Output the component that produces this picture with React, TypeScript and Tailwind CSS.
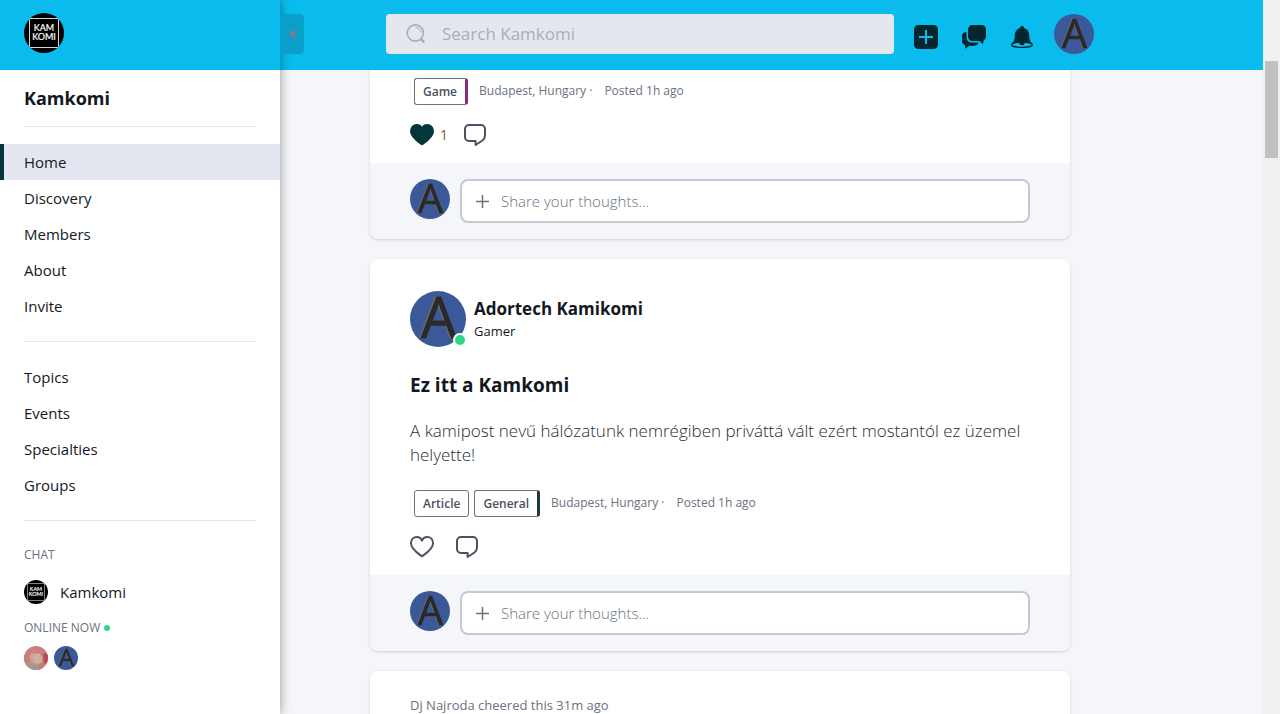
import { useState } from 'react';
import { clsx } from 'clsx';

const mainLinks = ['Home', 'Discovery', 'Members', 'About', 'Invite'];
const groupLinks = ['Topics', 'Events', 'Specialties', 'Groups'];

type Tag = { label: string; accent?: string };

const Avatar = ({ className }: { className: string }) => (
  <svg viewBox="0 0 40 40" className={clsx('shrink-0 rounded-full bg-[#3b5998]', className)} role="img" aria-label="Adortech Kamikomi">
    <text
      x="20.500"
      y="33.700"
      fontFamily="'Open Sans', sans-serif"
      fontSize="40"
      textAnchor="middle"
      fill="#2a2a2c"
      stroke="#2a2a2c"
      strokeWidth="0.700"
      className="drop-shadow-[-1px_0_0_#6f6b68]"
    >
      A
    </text>
  </svg>
);

const Logo = ({ className }: { className: string }) => (
  <svg viewBox="0 0 40 40" className={clsx('shrink-0 rounded-full bg-black', className)} role="img" aria-label="Kamkomi">
    <rect x="5.500" y="5.500" width="29" height="29" fill="none" stroke="#d4d4d4" />
    <g fontFamily="Lato, sans-serif" fontSize="9" fill="#fff" stroke="#fff" strokeWidth="0.200" textAnchor="middle">
      <text x="20" y="18">KAM</text>
      <text x="20" y="26.500">KOMI</text>
    </g>
  </svg>
);

const PhotoAvatar = () => (
  <svg viewBox="0 0 24 24" className="size-6 rounded-full" role="img" aria-label="Dj Najroda">
    <rect width="24" height="24" fill="#cc7f7f" />
    <path d="M0 9l6-3 3 12-9 3z" fill="#c98074" />
    <path d="M19 7l5 1v8l-4 3z" fill="#b94a55" />
    <path d="M2 17l6-2 8 4 3 5H3z" fill="#a59690" />
    <path d="M15 18l6-1-2 5-4 2z" fill="#bd8669" />
    <path d="M7 7l6 1 5 3v5l-5 3-6-3-2-5z" fill="#d99b95" />
    <ellipse cx="13.500" cy="12.500" rx="4.500" ry="5" fill="#cbb3a2" />
  </svg>
);

const HeartIcon = ({ filled }: { filled?: boolean }) => (
  <svg viewBox="0 0 24 22" className="h-[22px] w-6" fill={filled ? '#04363a' : 'none'} stroke={filled ? '#04363a' : '#4a5160'} strokeWidth="2" strokeLinejoin="round">
    <path d="M12 20.300C9 18 1 13.500 1 7.300 1 3.500 3.600 1 6.700 1 9.200 1 11.200 2.600 12 4.600 12.800 2.600 14.800 1 17.300 1 20.400 1 23 3.500 23 7.300 23 13.500 15 18 12 20.300z" />
  </svg>
);

const CommentIcon = () => (
  <svg viewBox="0 0 22 22" className="size-[22px]" fill="none" stroke="#4a5160" strokeWidth="2" strokeLinejoin="round">
    <path d="M5 1h12a4 4 0 0 1 4 4v6.500c0 2.200-.9 3.700-2.600 5L11.600 21v-4H5a4 4 0 0 1-4-4V5a4 4 0 0 1 4-4z" />
  </svg>
);

const SearchIcon = () => (
  <svg viewBox="0 0 20 20" className="size-5 shrink-0" fill="none" stroke="#a9aeb9" strokeWidth="1.700">
    <circle cx="9.300" cy="9" r="8.100" />
    <path d="M9.500 3.400a5.600 5.600 0 0 1 5.300 5" strokeWidth="1" />
    <path d="M14.800 15l3.600 3.300" strokeWidth="2.400" />
  </svg>
);

const Tags = ({ tags }: { tags: Tag[] }) => (
  <div className="flex items-center">
    <div className="ml-1 flex gap-[5px]">
      {tags.map((tag) => (
        <a
          key={tag.label}
          href="#"
          className={clsx(
            'h-[27px] rounded-[3px] border border-[#6b7280] px-2 text-xs leading-[25px] font-semibold text-[#4a5160]',
            tag.accent && 'border-r-[3px]',
            tag.accent
          )}
        >
          {tag.label}
        </a>
      ))}
    </div>
    <p className="ml-[11px] flex pb-0.5 text-xs leading-5 text-[#6b7280]">
      <span>Budapest, Hungary ·</span>
      <span className="ml-3">Posted 1h ago</span>
    </p>
  </div>
);

const Actions = ({ likes }: { likes?: number }) => (
  <div className="mt-[18px] flex h-6 items-center gap-4">
    <button aria-label="Like" className="flex items-center gap-1.5 text-sm text-[#8a5a2c]">
      <HeartIcon filled={!!likes} />
      <span>{likes}</span>
    </button>
    <button aria-label="Comment">
      <CommentIcon />
    </button>
  </div>
);

const CommentBox = () => (
  <div className="flex gap-2.5 rounded-b-lg bg-[#f4f6fa] px-10 py-4">
    <Avatar className="size-10" />
    <label className="flex h-11 flex-1 items-center gap-3 rounded-lg border-2 border-[#c4c8d2] bg-white px-3.5">
      <svg viewBox="0 0 13 13" className="size-[13px]" stroke="#6b7280" strokeWidth="1.500">
        <path d="M6.500 0v13M0 6.500h13" />
      </svg>
      <input
        aria-label="Share your thoughts"
        placeholder="Share your thoughts..."
        className="min-w-0 flex-1 text-[15px] font-light outline-none placeholder:text-[#6b7280]"
      />
    </label>
  </div>
);

const NavLinks = ({ items, active, onSelect }: { items: string[]; active: string; onSelect: (item: string) => void }) => (
  <ul>
    {items.map((item) => (
      <li key={item}>
        <a
          href="#"
          onClick={() => onSelect(item)}
          className={clsx(
            'block h-9 border-l-4 px-5 text-[15px] leading-9 font-medium text-[#12181f]',
            item === active ? 'border-[#04363a] bg-[#e4e7f0]' : 'border-transparent'
          )}
        >
          {item}
        </a>
      </li>
    ))}
  </ul>
);

const Sidebar = () => {
  const [active, setActive] = useState('Home');

  return (
    <aside className="relative z-20 w-[280px] shrink-0 bg-white shadow-[0_0_10px_rgba(0,0,0,0.4)]">
      <div className="flex h-[70px] items-start bg-[#0abcee] px-6 pt-[13px]">
        <Logo className="size-10" />
      </div>
      <button
        aria-label="Collapse menu"
        className="absolute top-3.5 left-full flex h-10 w-6 items-center justify-center rounded-r bg-[#0a9fca]"
      >
        <svg viewBox="0 0 6 12" className="h-3 w-1.5" fill="#7e7b88">
          <path d="M6 0v12L0 6z" />
        </svg>
      </button>

      <h1 className="px-6 pt-3.5 text-lg leading-7 font-bold text-[#12181f]">Kamkomi</h1>
      <hr className="mx-6 mt-3.5 mb-[17px] border-[#e4e7f0]" />
      <nav>
        <NavLinks items={mainLinks} active={active} onSelect={setActive} />
        <hr className="mx-6 my-[17px] border-[#e4e7f0]" />
        <NavLinks items={groupLinks} active={active} onSelect={setActive} />
      </nav>
      <hr className="mx-6 mt-[17px] mb-6 border-[#e4e7f0]" />

      <div className="px-6">
        <h2 className="text-xs leading-5 font-medium text-[#6b7280]">CHAT</h2>
        <a href="#" className="mt-[15px] flex items-center gap-3 text-[15px] leading-6 font-medium text-[#12181f]">
          <Logo className="size-6" />
          Kamkomi
        </a>
        <h2 className="mt-3.5 flex items-center gap-1 text-xs leading-5 font-medium text-[#6b7280]">
          ONLINE NOW
          <span className="size-1.5 rounded-full bg-[#2bd984]" />
        </h2>
        <div className="mt-2 flex gap-1.5">
          <PhotoAvatar />
          <Avatar className="size-6" />
        </div>
      </div>
    </aside>
  );
};

const Header = () => (
  <header className="relative z-10 flex h-[70px] shrink-0 items-start bg-[#0abcee] pt-3.5 pl-[106px]">
    <label className="flex h-10 w-full max-w-[508px] items-center gap-4 rounded bg-[#e4e7f0] px-5">
      <SearchIcon />
      <input
        type="search"
        aria-label="Search"
        placeholder="Search Kamkomi"
        className="min-w-0 flex-1 text-[17px] outline-none placeholder:text-[#a9aeb9]"
      />
    </label>
    <div className="mt-[11px] ml-5 flex gap-6">
      <button aria-label="Create">
        <svg viewBox="0 0 24 24" className="size-6">
          <rect width="24" height="24" rx="4.500" fill="#04262e" />
          <path d="M12 5v14M5 12h14" stroke="#0abcee" strokeWidth="2" />
        </svg>
      </button>
      <button aria-label="Messages">
        <svg viewBox="0 0 24 24" className="size-6" fill="#04262e">
          <path d="M4.500 7V12.500C4.500 15.500 7 17.600 10 17.600H16.700C16 19.500 14.700 20.700 12.500 20.700H7.600L3.200 23.800V20.300C1.200 19.400 0 18 0 16V11C0 8.800 1.700 7 4.500 7z" />
          <path
            d="M10.500 0H19.500A4.500 4.500 0 0 1 24 4.500V11.500C24 13 23 14.600 21.600 15.500L21 19.300 17.400 16H10.500A4.500 4.500 0 0 1 6 11.500V4.500A4.500 4.500 0 0 1 10.500 0z"
            stroke="#0abcee"
            strokeWidth="2"
            paintOrder="stroke"
          />
        </svg>
      </button>
      <button aria-label="Notifications">
        <svg viewBox="0 0 24 24" className="size-6">
          <path d="M12 1c1.200 0 2 .8 2 2 3.200.9 5.200 3.600 5.200 7 0 4.200.8 6.300 2.600 8.300H2.200C4 16.300 4.800 14.200 4.800 10c0-3.400 2-6.100 5.200-7 0-1.200.8-2 2-2z" fill="#04262e" />
          <ellipse cx="12" cy="19.700" rx="10.300" ry="2.700" fill="#0abcee" stroke="#04262e" strokeWidth="1.300" />
          <path d="M9.500 17h5v1.200a2.500 2 0 0 1-5 0z" fill="#04262e" />
        </svg>
      </button>
    </div>
    <button aria-label="Profile" className="ml-5">
      <Avatar className="size-10" />
    </button>
  </header>
);

const Feed = () => (
  <main className="min-h-0 flex-1 overflow-hidden pl-[90px]">
    <div className="flex max-w-[700px] flex-col gap-5">
      <article className="rounded-b-lg bg-white shadow-[0_1px_3px_rgba(0,0,0,0.16)]">
        <div className="px-10 pt-2 pb-4">
          <Tags tags={[{ label: 'Game', accent: 'border-r-[#8a2a7c]' }]} />
          <Actions likes={1} />
        </div>
        <CommentBox />
      </article>

      <article className="rounded-lg bg-white shadow-[0_1px_3px_rgba(0,0,0,0.16)]">
        <div className="px-10 pt-8 pb-4">
          <div className="flex items-center gap-2">
            <div className="relative">
              <Avatar className="size-14" />
              <span className="absolute -right-px bottom-0 size-3.5 rounded-full border-2 border-white bg-[#2bd984]" />
            </div>
            <div className="text-[#12181f]">
              <p className="text-[17px] leading-6 font-bold">Adortech Kamikomi</p>
              <p className="text-[13px] leading-5">Gamer</p>
            </div>
          </div>
          <h2 className="mt-6 text-[19px] leading-7 font-bold text-[#12181f]">Ez itt a Kamkomi</h2>
          <p className="mt-5 mb-[23px] text-[17px] leading-6 font-light text-[#262b35]">
            A kamipost nevű hálózatunk nemrégiben priváttá vált ezért mostantól ez üzemel helyette!
          </p>
          <Tags tags={[{ label: 'Article' }, { label: 'General', accent: 'border-r-[#1f3a36]' }]} />
          <Actions />
        </div>
        <CommentBox />
      </article>

      <article className="rounded-lg bg-white px-10 py-6 shadow-[0_1px_3px_rgba(0,0,0,0.16)]">
        <p className="text-[13px] leading-5 text-[#6b7280]">Dj Najroda cheered this 31m ago</p>
      </article>
    </div>
  </main>
);

export default function App() {
  return (
    <div className="flex h-screen overflow-hidden bg-[#f4f6fa] font-['Open_Sans','Noto_Sans',sans-serif]">
      <Sidebar />
      <div className="flex min-w-0 flex-1 flex-col">
        <Header />
        <Feed />
      </div>
      {/* Scrollbar track */}
      <div className="w-[17px] shrink-0 bg-[#f1f1f1] px-0.5 pt-[61px]">
        <div className="h-[97px] bg-[#c1c1c1]" />
      </div>
    </div>
  );
}
